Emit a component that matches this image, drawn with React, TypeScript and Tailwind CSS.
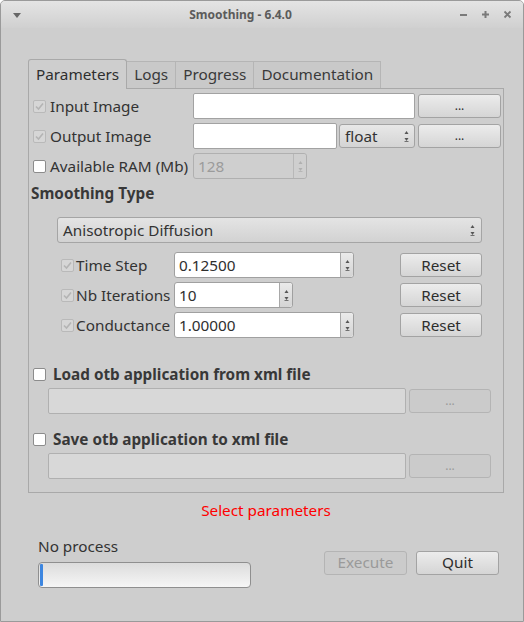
import type { ReactNode } from "react";

const FONT = { fontFamily: '"Noto Sans", "Open Sans", sans-serif' };

function Check({ checked, disabled }: { checked?: boolean; disabled?: boolean }) {
  return (
    <span
      className={`flex h-[13px] w-[13px] shrink-0 items-center justify-center rounded-[2px] border ${
        disabled ? "border-[#b9b9b9] bg-[#d6d6d6]" : "border-[#8c8c8c] bg-white"
      }`}
    >
      {checked && (
        <svg width="9" height="9" viewBox="0 0 9 9">
          <path d="M1 4.5 L3.5 7 L8 1.5" fill="none" stroke="#b4b4b4" strokeWidth="1.6" />
        </svg>
      )}
    </span>
  );
}

function Btn({ children, w = "w-[83px]", disabled }: { children: ReactNode; w?: string; disabled?: boolean }) {
  return (
    <div
      className={`flex h-[24px] ${w} shrink-0 items-center justify-center rounded-[3px] border ${
        disabled
          ? "border-[#b4b4b4] bg-[#cbcbcb] text-[#9a9a9a]"
          : "border-[#a3a3a3] bg-gradient-to-b from-[#ececec] to-[#d5d5d5] text-[#2e2e2e]"
      }`}
    >
      {children}
    </div>
  );
}

function Arrows({ dim }: { dim?: boolean }) {
  const c = dim ? "#b0b0b0" : "#555";
  return (
    <svg width="7" height="14" viewBox="0 0 7 14">
      <path d="M3.5 2 L5.5 5 L1.5 5 Z" fill={c} />
      <path d="M1.5 9 L5.5 9 L3.5 12 Z" fill={c} />
      <path d="M1.5 12.5 L5.5 12.5" stroke={c} strokeWidth="0.8" />
    </svg>
  );
}

function Spin({ value, w, disabled }: { value: string; w: string; disabled?: boolean }) {
  return (
    <div
      className={`flex h-[26px] ${w} shrink-0 rounded-[3px] border ${
        disabled ? "border-[#b0b0b0] bg-[#cfcfcf] text-[#9b9b9b]" : "border-[#a0a0a0] bg-white text-[#2e2e2e]"
      }`}
    >
      <div className="flex flex-1 items-center pl-[4px]">{value}</div>
      <div
        className={`flex w-[13px] items-center justify-center rounded-r-[3px] border-l ${
          disabled ? "border-[#b8b8b8] bg-[#cfcfcf]" : "border-[#a8a8a8] bg-gradient-to-b from-[#eaeaea] to-[#d4d4d4]"
        }`}
      >
        <Arrows dim={disabled} />
      </div>
    </div>
  );
}

function TextField({ w }: { w: string }) {
  return <div className={`h-[26px] ${w} shrink-0 rounded-[2px] border border-[#a2a2a2] bg-white`} />;
}

function Tab({ label, active }: { label: string; active?: boolean }) {
  return active ? (
    <div className="relative z-10 -mb-px flex h-[30px] items-center rounded-t-[3px] border border-b-0 border-[#a9a9a9] bg-[#cecece] px-[7px] pb-[1px] text-[#2f2f2f]">
      {label}
    </div>
  ) : (
    <div className="flex h-[27px] items-center border border-b-0 border-l-0 border-[#b5b5b5] bg-[#c9c9c9] px-[7px] pb-[1px] text-[#3a3a3a]">
      {label}
    </div>
  );
}

function ParamRow({ label, checked, unchecked, children }: { label: string; checked?: boolean; unchecked?: boolean; children: ReactNode }) {
  return (
    <div className="flex h-[26px] items-center">
      <div className="flex w-[160px] items-center gap-[4px] whitespace-nowrap">
        <Check checked={checked} disabled={!unchecked} />
        <span>{label}</span>
      </div>
      {children}
    </div>
  );
}

function SubRow({ label, children }: { label: string; children: ReactNode }) {
  return (
    <div className="flex h-[26px] items-center">
      <div className="ml-[28px] flex w-[113px] items-center gap-[2px]">
        <Check checked disabled />
        <span className="whitespace-nowrap">{label}</span>
      </div>
      {children}
    </div>
  );
}

function XmlBlock({ label }: { label: string }) {
  return (
    <div className="flex flex-col">
      <div className="flex h-[20px] items-center gap-[7px]">
        <Check />
        <span className="font-bold text-[#383838]">{label}</span>
      </div>
      <div className="mt-[4px] flex items-center gap-[3px] pl-[15px]">
        <div className="h-[26px] w-[358px] rounded-[2px] border border-[#b0b0b0] bg-[#d8d8d8]" />
        <Btn w="w-[82px]" disabled>
          <span className="text-[12px] leading-none">...</span>
        </Btn>
      </div>
    </div>
  );
}

export default function App() {
  return (
    <div
      style={FONT}
      className="flex h-[622px] w-[524px] flex-col overflow-hidden rounded-t-[5px] border border-[#9a9a9a] bg-[#cecece] text-[15.3px] text-[#333]"
    >
      {/* title bar */}
      <div className="flex h-[27px] items-center bg-gradient-to-b from-[#e4e4e4] to-[#d0d0d0] px-[11px] text-[#5b5b5b]">
        <svg width="10" height="8" viewBox="0 0 10 8">
          <path d="M1 2 L9 2 L5 7 Z" fill="#666" />
        </svg>
        <div className="flex-1 text-center text-[12px] font-bold">Smoothing - 6.4.0</div>
        <div className="flex items-center gap-[13px] text-[#777]">
          <svg width="9" height="9" viewBox="0 0 9 9"><path d="M1 5 H8" stroke="#7a7a7a" strokeWidth="2" /></svg>
          <svg width="9" height="9" viewBox="0 0 9 9"><path d="M1 4.5 H8 M4.5 1 V8" stroke="#7a7a7a" strokeWidth="2" /></svg>
          <svg width="9" height="9" viewBox="0 0 9 9"><path d="M1.5 1.5 L7.5 7.5 M7.5 1.5 L1.5 7.5" stroke="#7a7a7a" strokeWidth="1.8" /></svg>
        </div>
      </div>

      <div className="flex flex-1 flex-col pl-[27px] pt-[31px]">
        {/* tabs */}
        <div className="flex items-end">
          <Tab label="Parameters" active />
          <Tab label="Logs" />
          <Tab label="Progress" />
          <Tab label="Documentation" />
        </div>

        {/* panel */}
        <div className="flex h-[405px] w-[476px] flex-col border border-[#a9a9a9] pl-[4px] pt-[4px]">
          <div className="flex flex-col gap-[4px]">
            <ParamRow label="Input Image" checked>
              <TextField w="w-[222px]" />
              <div className="ml-[3px]">
                <Btn><span className="text-[12px] leading-none">...</span></Btn>
              </div>
            </ParamRow>
            <ParamRow label="Output Image" checked>
              <TextField w="w-[144px]" />
              <div className="ml-[2px] flex h-[24px] w-[76px] items-center justify-between rounded-[3px] border border-[#a3a3a3] bg-gradient-to-b from-[#e8e8e8] to-[#d4d4d4] pl-[5px] pr-[4px]">
                <span>float</span>
                <Arrows />
              </div>
              <div className="ml-[3px]">
                <Btn><span className="text-[12px] leading-none">...</span></Btn>
              </div>
            </ParamRow>
            <ParamRow label="Available RAM (Mb)" unchecked>
              <Spin value="128" w="w-[114px]" disabled />
            </ParamRow>
          </div>

          <div className="-ml-[2px] mt-[3px] h-[24px] font-bold text-[#383838]">Smoothing Type</div>

          <div className="ml-[24px] mt-[11px] flex h-[26px] w-[425px] items-center justify-between rounded-[3px] border border-[#a5a5a5] bg-gradient-to-b from-[#e4e4e4] to-[#d2d2d2] pl-[5px] pr-[5px]">
            <span>Anisotropic Diffusion</span>
            <Arrows />
          </div>

          <div className="mt-[9px] flex flex-col gap-[4px]">
            <SubRow label="Time Step">
              <Spin value="0.12500" w="w-[180px]" />
              <div className="ml-[46px]"><Btn w="w-[82px]">Reset</Btn></div>
            </SubRow>
            <SubRow label="Nb Iterations">
              <Spin value="10" w="w-[119px]" />
              <div className="ml-[107px]"><Btn w="w-[82px]">Reset</Btn></div>
            </SubRow>
            <SubRow label="Conductance">
              <Spin value="1.00000" w="w-[180px]" />
              <div className="ml-[46px]"><Btn w="w-[82px]">Reset</Btn></div>
            </SubRow>
          </div>

          <div className="mt-[26px] flex flex-col gap-[15px]">
            <XmlBlock label="Load otb application from xml file" />
            <XmlBlock label="Save otb application to xml file" />
          </div>
        </div>

        <div className="mt-[6px] w-[476px] text-center text-[#ff0000]">Select parameters</div>

        <div className="mt-[12px] flex w-[471px] items-end pl-[10px]">
          <div className="flex flex-col">
            <span className="leading-[24px]">No process</span>
            <div className="mt-[4px] flex h-[26px] w-[213px] rounded-[4px] border border-[#8f8f8f] bg-gradient-to-b from-[#dcdcdc] to-[#f6f6f6] p-[1px]">
              <div className="w-[3px] rounded-[1px] bg-[#3d86e0]" />
            </div>
          </div>
          <div className="mb-[13px] ml-auto flex gap-[9px]">
            <Btn w="w-[83px]" disabled>Execute</Btn>
            <Btn w="w-[83px]">Quit</Btn>
          </div>
        </div>
      </div>
    </div>
  );
}
